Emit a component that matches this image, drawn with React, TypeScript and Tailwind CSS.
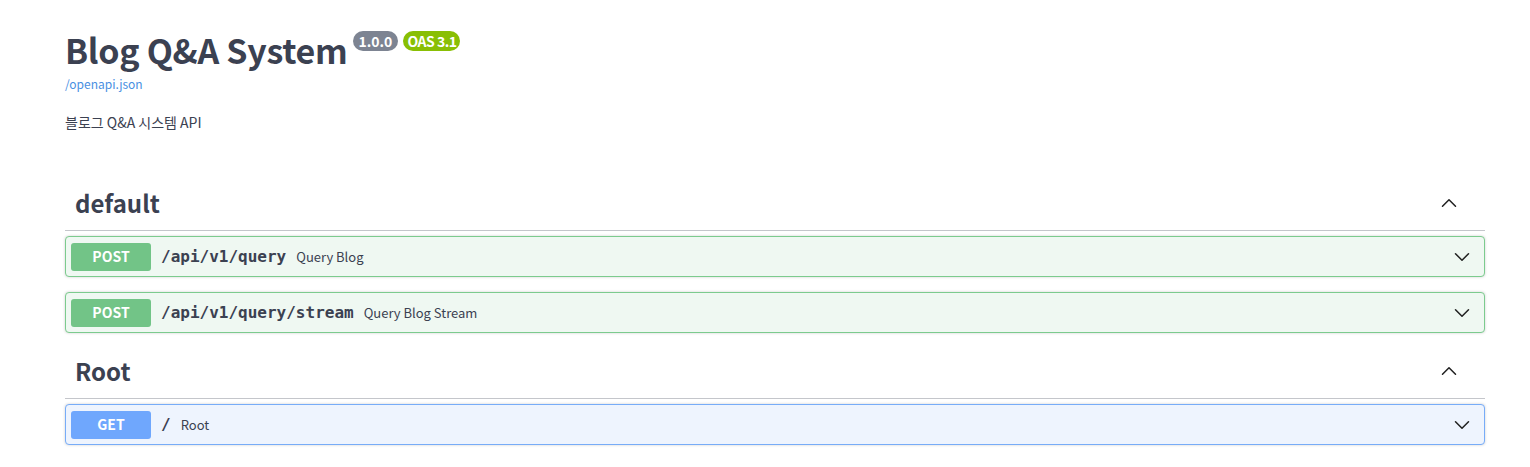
import { ChevronDown, ChevronUp } from "lucide-react";

type Op = {
  method: "POST" | "GET";
  path: string;
  summary: string;
};

const sections: { name: string; ops: Op[] }[] = [
  {
    name: "default",
    ops: [
      { method: "POST", path: "/api/v1/query", summary: "Query Blog" },
      { method: "POST", path: "/api/v1/query/stream", summary: "Query Blog Stream" },
    ],
  },
  {
    name: "Root",
    ops: [{ method: "GET", path: "/", summary: "Root" }],
  },
];

const sans = "font-['Noto_Sans_CJK_KR','Noto_Sans',sans-serif]";

const OpBlock = ({ op }: { op: Op }) => {
  const isPost = op.method === "POST";
  return (
    <div
      className={`mb-[15px] flex h-[41px] items-center rounded-[4px] border px-[5px] shadow-[0_0_3px_rgba(0,0,0,0.19)] ${
        isPost ? "border-[#7ccb8e] bg-[#eff8f2]" : "border-[#77acf8] bg-[#eef4fe]"
      }`}
    >
      <span
        className={`flex h-[28px] w-[80px] items-center justify-center rounded-[3px] text-[14px] font-bold text-white ${sans} ${
          isPost ? "bg-[#72c487]" : "bg-[#6fa7fd]"
        }`}
      >
        {op.method}
      </span>
      <span className="pl-[10px] pr-[10px] font-['DejaVu_Sans_Mono',monospace] text-[16px] font-bold text-[#3b4151]">
        {op.path}
      </span>
      <span className={`text-[13px] text-[#3b4151] ${sans}`}>{op.summary}</span>
      <ChevronDown className="ml-auto mr-[4px] h-[26px] w-[26px] text-[#222]" strokeWidth={1.4} />
    </div>
  );
};

export default function App() {
  return (
    <div className={`min-h-[467px] bg-white ${sans} text-[#3b4151]`}>
      <div className="ml-[65px] w-[1420px] pt-[26px]">
        {/* info */}
        <div className="flex items-start">
          <h1 className="text-[34px] font-bold leading-[48px] tracking-[-0.3px] text-[#3b4151]">Blog Q&amp;A System</h1>
          <div className="ml-[5px] mt-[5px] flex gap-[5px]">
            <span className="rounded-[10px] bg-[#7d8492] px-[6px] text-[14px] font-bold leading-[20px] text-white">
              1.0.0
            </span>
            <span className="rounded-[10px] bg-[#89bf04] px-[4px] text-[14px] font-bold leading-[20px] tracking-[-0.5px] text-white">
              OAS 3.1
            </span>
          </div>
        </div>
        <a className="mt-[2px] block text-[12px] leading-[16px] text-[#4990e2]">/openapi.json</a>
        <p className="mt-[20px] text-[14px] leading-[20px] text-[#3b4151]">블로그 Q&amp;A 시스템 API</p>

        {/* tags */}
        <div className="mt-[48px]">
          {sections.map((s) => (
            <div key={s.name}>
              <div className="mb-[5px] flex h-[51px] items-center border-b border-[#c4c6cb] pb-[5px] pl-[10px] pr-[23px]">
                <h3 className="text-[24px] font-bold text-[#3b4151]">{s.name}</h3>
                <ChevronUp className="ml-auto h-[26px] w-[26px] text-[#222]" strokeWidth={1.4} />
              </div>
              {s.ops.map((op) => (
                <OpBlock key={op.path} op={op} />
              ))}
            </div>
          ))}
        </div>
      </div>
    </div>
  );
}
